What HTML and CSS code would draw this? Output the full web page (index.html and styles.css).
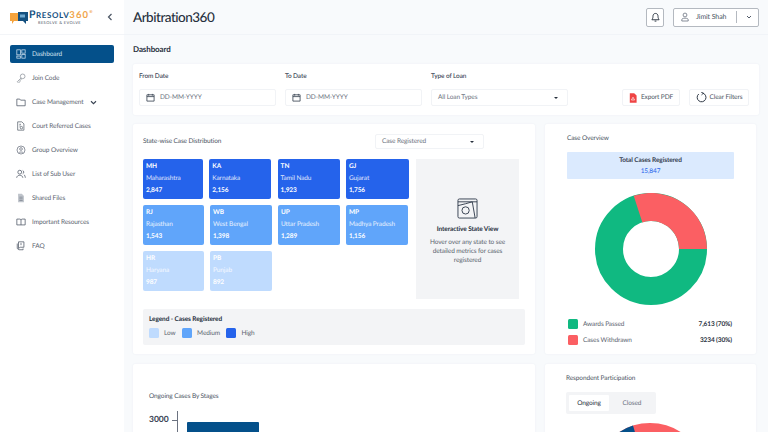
FILE: index.html
```html
<!DOCTYPE html>
<html lang="en">
<head>
<meta charset="utf-8">
<title>Arbitration360</title>
<link rel="stylesheet" href="styles.css">
</head>
<body>
<div class="app">
  <aside class="sidebar">
    <div class="brand">
      <svg class="brand-icon" viewBox="0 0 18 14" width="18" height="14">
        <path d="M0 2h9v8H4l-2 3v-3H0z" fill="#f5a33d"/>
        <path d="M8 1h10v9h-2v3l-3-3H8z" fill="#14507f"/>
        <rect x="10" y="3.500" width="5" height="3" fill="#6fa8cf"/>
      </svg>
      <div class="brand-text">
        <div class="brand-name"><span class="brand-p">P</span><span class="brand-navy">RESOLV</span><span class="brand-num">360</span><sup class="brand-reg">®</sup></div>
        <div class="brand-tag">RESOLVE &amp; EVOLVE</div>
      </div>
      <svg class="collapse" viewBox="0 0 6 8" width="6" height="8"><path d="M4.500 1 1.500 4l3 3" fill="none" stroke="#4b5563" stroke-width="1.200"/></svg>
    </div>
    <nav class="nav">
      <a class="nav-item active">
        <svg viewBox="0 0 12 12" class="ni"><g fill="none" stroke="#cfe0ee" stroke-width=".9"><rect x="1" y="1" width="4.500" height="6"/><rect x="7" y="1" width="4" height="4"/><rect x="1" y="8.500" width="4.500" height="2.500"/><rect x="7" y="6.500" width="4" height="4.500"/></g></svg>
        <span>Dashboard</span>
      </a>
      <a class="nav-item">
        <svg viewBox="0 0 12 12" class="ni"><g fill="none" stroke="#8b929b" stroke-width=".9"><circle cx="8" cy="4" r="2.800"/><path d="M6 6 1.500 10.500l1 1 1-1 .6.500 1-1-.6-.8L7 7"/></g></svg>
        <span>Join Code</span>
      </a>
      <a class="nav-item">
        <svg viewBox="0 0 12 12" class="ni"><path d="M1 2.500h3.500l1 1.300H11V10.500H1z" fill="none" stroke="#4b5563" stroke-width=".9"/></svg>
        <span class="nav-grow">Case Management</span>
        <svg class="nav-chev" viewBox="0 0 8 6" width="7" height="5"><path d="M1 1.500 4 4.500l3-3" fill="none" stroke="#374151" stroke-width="1.300"/></svg>
      </a>
      <a class="nav-item">
        <svg viewBox="0 0 12 12" class="ni"><g fill="none" stroke="#5b6470" stroke-width=".9"><path d="M2 1h5l2.500 2.500V11H2z"/><circle cx="6.500" cy="8" r="1.500"/><path d="M4 4h2M4 6h1.500"/></g></svg>
        <span>Court Referred Cases</span>
      </a>
      <a class="nav-item">
        <svg viewBox="0 0 12 12" class="ni"><g fill="none" stroke="#6b7280" stroke-width=".9"><circle cx="6" cy="6" r="4.800"/><circle cx="6" cy="4.800" r="1.600"/><path d="M3.300 9.500c.5-1.500 4.900-1.500 5.400 0"/></g></svg>
        <span>Group Overview</span>
      </a>
      <a class="nav-item">
        <svg viewBox="0 0 12 12" class="ni"><g fill="none" stroke="#4b5563" stroke-width=".9"><circle cx="4.500" cy="3.800" r="2.300"/><path d="M.8 10.500c.4-4 7-4 7.400 0"/><path d="M8 1.800a2.200 2.200 0 0 1 0 4M9.500 6.800c1 .6 1.500 2 1.700 3.700"/></g></svg>
        <span>List of Sub User</span>
      </a>
      <a class="nav-item">
        <svg viewBox="0 0 12 12" class="ni"><path d="M2.500 1H7l2.500 2.500V11h-7z" fill="#bfc4cb"/><path d="M4 5h4M4 7h4M4 9h4" stroke="#6b7280" stroke-width=".7"/></svg>
        <span>Shared Files</span>
      </a>
      <a class="nav-item">
        <svg viewBox="0 0 12 12" class="ni"><g fill="none" stroke="#4b5563" stroke-width=".9"><path d="M1 2.500h3.500c.8 0 1.500.5 1.500 1.300 0-.8.700-1.300 1.500-1.300H11v7H1z"/><path d="M6 3.800v5.700"/></g></svg>
        <span>Important Resources</span>
      </a>
      <a class="nav-item">
        <svg viewBox="0 0 12 12" class="ni"><g fill="none" stroke="#4b5563" stroke-width=".9"><path d="M3 1h6.500v6.500H5L3 9z"/><path d="M1.500 3v6l2 1.500h5V9"/><path d="M6 2.500v2.500"/></g></svg>
        <span>FAQ</span>
      </a>
    </nav>
  </aside>

  <div class="main">
    <header class="topbar">
      <h1 class="app-title">Arbitration360</h1>
      <div class="top-actions">
        <button class="bell">
          <svg viewBox="0 0 10 12" width="9" height="11"><path d="M5 1.500c-2 0-2.800 1.500-2.800 3.300 0 2-.8 3-1.200 3.700h8c-.4-.7-1.200-1.700-1.200-3.700C7.800 3 7 1.500 5 1.500zM4 10h2" fill="none" stroke="#1f2937" stroke-width="1"/></svg>
        </button>
        <div class="user">
          <svg viewBox="0 0 10 12" width="8" height="10"><g fill="none" stroke="#6b7280" stroke-width="1"><circle cx="5" cy="3.500" r="2.400"/><path d="M1 11V9.500C1 8 2.500 7.500 5 7.500s4 .5 4 2V11z"/></g></svg>
          <span class="user-name">Jimit Shah</span>
          <span class="user-div"></span>
          <svg class="user-chev" viewBox="0 0 8 6" width="6" height="4"><path d="M1 1.500 4 4.500l3-3" fill="none" stroke="#374151" stroke-width="1.300"/></svg>
        </div>
      </div>
    </header>

    <section class="content">
      <h2 class="page-title">Dashboard</h2>

      <div class="card filters">
        <div class="field">
          <label class="lbl">From Date</label>
          <div class="input"><svg class="cal" viewBox="0 0 10 10"><path d="M1 2h8v7H1zM1 4h8M3 1v2M7 1v2" fill="none" stroke="#374151" stroke-width=".9"/></svg><span>DD-MM-YYYY</span></div>
        </div>
        <div class="field">
          <label class="lbl">To Date</label>
          <div class="input"><svg class="cal" viewBox="0 0 10 10"><path d="M1 2h8v7H1zM1 4h8M3 1v2M7 1v2" fill="none" stroke="#374151" stroke-width=".9"/></svg><span>DD-MM-YYYY</span></div>
        </div>
        <div class="field">
          <label class="lbl">Type of Loan</label>
          <div class="input select-in"><span>All Loan Types</span><i class="caret"></i></div>
        </div>
        <div class="filter-btns">
          <button class="btn btn-pdf"><svg viewBox="0 0 10 12" width="8" height="10"><path d="M1 0h5.500L9.500 3v9H1z" fill="#ef4444"/><path d="M3 8.500 5 5l2 3.500z" fill="none" stroke="#fff" stroke-width=".8"/></svg><span>Export PDF</span></button>
          <button class="btn btn-clear"><svg viewBox="0 0 12 12" width="11" height="11"><path d="M7.500 1.300A4.800 4.800 0 1 1 3 2.200" fill="none" stroke="#1f2937" stroke-width="1"/><path d="M5.500 0 8 1.300 6 3.200" fill="none" stroke="#1f2937" stroke-width=".9"/></svg><span>Clear Filters</span></button>
        </div>
      </div>

      <div class="grid">
        <div class="card state-card">
          <div class="state-head">
            <div class="card-title">State-wise Case Distribution</div>
            <div class="input state-select"><span>Case Registered</span><i class="caret"></i></div>
          </div>
          <div class="state-body">
            <div class="tiles">
              <div class="tile-row row-a">
                <div class="tile high"><b>MH</b><span>Maharashtra</span><b>2,847</b></div>
                <div class="tile high"><b>KA</b><span>Karnataka</span><b>2,156</b></div>
                <div class="tile high"><b>TN</b><span>Tamil Nadu</span><b>1,923</b></div>
                <div class="tile high"><b>GJ</b><span>Gujarat</span><b>1,756</b></div>
              </div>
              <div class="tile-row row-b">
                <div class="tile med"><b>RJ</b><span>Rajasthan</span><b>1,543</b></div>
                <div class="tile med"><b>WB</b><span>West Bengal</span><b>1,398</b></div>
                <div class="tile med"><b>UP</b><span>Uttar Pradesh</span><b>1,289</b></div>
                <div class="tile med"><b>MP</b><span>Madhya Pradesh</span><b>1,156</b></div>
              </div>
              <div class="tile-row row-b">
                <div class="tile low"><b>HR</b><span>Haryana</span><b>987</b></div>
                <div class="tile low"><b>PB</b><span>Punjab</span><b>892</b></div>
              </div>
            </div>
            <div class="state-view">
              <svg viewBox="0 0 22 22" width="21" height="21"><g fill="none" stroke="#374151" stroke-width="1"><rect x="1" y="1" width="20" height="20" rx="1.500"/><path d="M1 4h20M16 4l3 17"/><circle cx="9" cy="13" r="3.800"/><path d="M1 8l8-2 7-2"/></g></svg>
              <strong>Interactive State View</strong>
              <p>Hover over any state to see detailed metrics for cases registered</p>
            </div>
          </div>
          <div class="legend">
            <div class="legend-title">Legend - Cases Registered</div>
            <div class="legend-items">
              <i class="sw sw-low"></i><span>Low</span>
              <i class="sw sw-med"></i><span>Medium</span>
              <i class="sw sw-high"></i><span>High</span>
            </div>
          </div>
        </div>

        <div class="card overview">
          <div class="card-title">Case Overview</div>
          <div class="total">
            <strong>Total Cases Registered</strong>
            <span>15,847</span>
          </div>
          <svg class="donut" viewBox="0 0 112 112" width="112" height="112">
            <circle cx="56" cy="56" r="42" fill="none" stroke="#10b981" stroke-width="28"/>
            <path d="M38.700 2.700A56 56 0 0 1 112 56H84A28 28 0 0 0 47.350 29.400z" fill="#fb5f63"/>
          </svg>
          <div class="ov-row"><i class="ov-sw green"></i><span class="ov-name">Awards Passed</span><b>7,613 (70%)</b></div>
          <div class="ov-row"><i class="ov-sw red"></i><span class="ov-name">Cases Withdrawn</span><b>3234 (30%)</b></div>
        </div>

        <div class="card stages">
          <div class="card-title">Ongoing Cases By Stages</div>
          <div class="chart">
            <span class="y-label">3000</span>
            <i class="tick"></i>
            <i class="axis"></i>
            <i class="bar"></i>
          </div>
        </div>

        <div class="card respond">
          <div class="card-title">Respondent Participation</div>
          <div class="tabs"><span class="tab on">Ongoing</span><span class="tab">Closed</span></div>
          <svg class="pie" viewBox="0 0 112 12" width="112" height="12">
            <circle cx="56" cy="56" r="42" fill="none" stroke="#fb5f63" stroke-width="28"/>
            <path d="M14 19A56 56 0 0 1 39 2.600L47 29.400z" fill="#04508a"/>
          </svg>
        </div>
      </div>
    </section>
  </div>
</div>
</body>
</html>
```
FILE: styles.css
```css
* { box-sizing: border-box; }
html, body { margin: 0; height: 432px; overflow: hidden; }
body { font-family: "Lato", "Open Sans", sans-serif; color: #374151; background: #f8fafc; font-size: 6.500px; letter-spacing: -.1px; text-rendering: geometricPrecision; }
.app { display: flex; width: 768px; height: 432px; overflow: hidden; }

.sidebar { width: 124px; flex: none; background: #fff; }
.brand { height: 35px; display: flex; align-items: center; padding: 0 0 0 10px; border-bottom: 1px solid #f3f5f8; }
.brand-icon { flex: none; margin-top: 1px; }
.brand-text { width: 66px; margin-left: 1px; }
.brand-name { font-size: 9px; line-height: 10px; letter-spacing: .6px; white-space: nowrap; font-weight: 700; }
.brand-p { color: #14507f; font-size: 10.500px; }
.brand-navy { color: #14507f; font-size: 8px; }
.brand-num { color: #f0a64c; font-size: 9.500px; letter-spacing: 1.100px; }
.brand-reg { color: #f0a64c; font-size: 4px; line-height: 0; vertical-align: 5px; }
.brand-tag { font-size: 4px; line-height: 4px; color: #4b5563; text-align: center; letter-spacing: .4px; margin-left: 9px; width: 43px; white-space: nowrap; }
.collapse { margin-left: 12px; }

.nav { padding: 10px 10px 0; display: flex; flex-direction: column; gap: 6px; }
.nav-item { height: 18px; display: flex; align-items: center; padding-left: 6px; border-radius: 2px; color: #5b6470; white-space: nowrap; }
.nav-item.active { background: #04508a; color: #cfe0ee; }
.ni { width: 10px; height: 10px; flex: none; margin-right: 6px; }
.nav-grow { width: 58px; }

.main { flex: 1; min-width: 0; display: flex; flex-direction: column; }
.topbar { height: 35px; flex: none; display: flex; align-items: center; justify-content: space-between; padding: 0 9px; border-bottom: 1px solid #f1f4f8; }
.app-title { margin: 0; font-size: 13.500px; letter-spacing: -.5px; font-weight: 500; color: #27303d; }
.top-actions { display: flex; align-items: center; gap: 9px; }
.bell { width: 18px; height: 19px; padding: 0; display: flex; align-items: center; justify-content: center; background: #fff; border: 1px solid #b4b9c0; border-radius: 2px; }
.user { width: 86px; height: 19px; display: flex; align-items: center; background: #fff; border: 1px solid #b4b9c0; border-radius: 2px; padding-left: 7px; }
.user-name { margin-left: 7px; width: 33px; font-size: 7px; color: #4b5563; white-space: nowrap; }
.user-div { width: 1px; height: 12px; flex: none; background: #b4b9c0; margin-left: 7px; }
.user-chev { margin-left: 9px; }

.content { padding: 0 0 0 9px; width: 635px; }
.page-title { margin: 0; height: 29px; font-size: 8px; line-height: 29px; font-weight: 700; color: #27303d; }
.card { background: #fff; border-radius: 2px; box-shadow: 0 0 2px rgba(226, 232, 240, .6); }

.filters { display: flex; width: 626px; height: 51px; padding: 8px 6px 0; margin-bottom: 9px; }
.field { width: 137px; margin-right: 9px; }
.lbl { display: block; line-height: 10px; color: #374151; font-weight: 500; margin-bottom: 7px; }
.input { height: 17px; display: flex; align-items: center; background: #fff; border: 1px solid #f1f3f6; border-radius: 2px; padding-left: 6px; color: #6b7280; white-space: nowrap; }
.cal { width: 9px; height: 9px; flex: none; margin-right: 5px; }
.select-in { justify-content: space-between; padding-right: 9px; }
.caret { width: 0; height: 0; border: 2px solid transparent; border-top: 2.500px solid #27303d; border-bottom: 0; }
.filter-btns { display: flex; gap: 9px; margin-left: 45px; padding-top: 17px; }
.btn { height: 17px; display: flex; align-items: center; justify-content: center; gap: 4px; padding: 0; background: #fff; border: 1px solid #f1f3f6; border-radius: 2px; font-family: inherit; font-size: 6.500px; letter-spacing: -.1px; color: #4b5563; white-space: nowrap; text-rendering: geometricPrecision; }
.btn-pdf { width: 58px; }
.btn-clear { width: 60px; gap: 3px; }

.grid { display: grid; grid-template-columns: 402px 211px; grid-template-rows: 230px 80px; gap: 10px; }
.state-card { padding: 10px 10px 0; }
.card-title { color: #4b5563; line-height: 10px; white-space: nowrap; }
.state-head { display: flex; align-items: center; justify-content: space-between; height: 15px; padding-right: 41px; }
.state-select { width: 109px; height: 15px; justify-content: space-between; padding-right: 9px; }
.state-body { display: flex; margin-top: 10px; }
.tiles { width: 273px; display: flex; flex-direction: column; gap: 6.500px; }
.tile-row { display: grid; column-gap: 6px; }
.row-a { grid-template-columns: 60px 62px 62px 63.500px; column-gap: 6.300px; }
.row-b { grid-template-columns: 61px 62px 62px 62px; }
.tile { height: 39.500px; border-radius: 2px; color: #fff; padding: 2.500px 3px; display: flex; flex-direction: column; justify-content: space-between; line-height: 10px; white-space: nowrap; }
.tile b { font-weight: 700; }
.tile span { font-weight: 400; opacity: .85; }
.high { background: #2563eb; }
.med { background: #60a5fa; }
.low { background: #bfdbfe; }
.state-view { width: 103px; height: 140px; background: #f3f4f6; display: flex; flex-direction: column; align-items: center; padding-top: 39px; text-align: center; }
.state-view strong { line-height: 10px; margin-top: 6px; color: #27303d; white-space: nowrap; }
.state-view p { margin: 3px 0 0; line-height: 9px; color: #5b6470; padding: 0 12px; }
.legend { width: 382px; height: 36px; margin-top: 10px; background: #f3f4f6; border-radius: 2px; padding: 6px 6px 0; }
.legend-title { line-height: 10px; font-weight: 700; color: #27303d; }
.legend-items { display: flex; align-items: center; margin-top: 3px; color: #5b6470; }
.sw { width: 10px; height: 10px; border-radius: 1.500px; margin-right: 5px; }
.legend-items span { margin-right: 6.500px; }
.sw-low { background: #bfdbfe; }
.sw-med { background: #60a5fa; }
.sw-high { background: #2563eb; }

.overview { padding: 10px 22px 0; }
.total { height: 27px; margin-top: 8px; background: #dbeafe; border-radius: 1px; display: flex; flex-direction: column; align-items: center; padding-top: 3px; line-height: 11px; }
.total strong { color: #374151; }
.total span { color: #2563eb; }
.donut { display: block; margin: 14px 0 0 28px; }
.ov-row { display: flex; align-items: center; height: 10px; margin-bottom: 6px; padding: 0 2px 0 1px; }
.donut + .ov-row { margin-top: 14px; }
.ov-sw { width: 10px; height: 10px; border-radius: 1.500px; margin-right: 5px; }
.green { background: #10b981; }
.red { background: #fb5f63; }
.ov-name { flex: 1; color: #5b6470; }
.ov-row b { font-weight: 700; color: #27303d; }

.stages { padding: 28px 16px 0; }
.chart { position: relative; height: 40px; }
.y-label { position: absolute; left: 0; top: 11px; font-size: 8.500px; letter-spacing: 0; line-height: 12px; font-weight: 700; color: #374151; }
.axis { position: absolute; left: 28px; top: 9px; width: 1px; height: 40px; background: #6b7280; }
.tick { position: absolute; left: 23px; top: 18px; width: 5px; height: 1px; background: #6b7280; }
.bar { position: absolute; left: 38px; top: 19.500px; width: 72px; height: 30px; background: #04508a; border-radius: 1px 1px 0 0; }

.respond { padding: 10px 21px 0; }
.tabs { display: flex; width: 90px; height: 22px; margin-top: 8px; padding: 3px; background: #f3f4f6; border-radius: 2px; }
.tab { width: 40px; display: flex; align-items: center; justify-content: center; color: #6b7280; }
.tab + .tab { margin-left: 3px; }
.tab.on { background: #fff; color: #27303d; border-radius: 1px; }
.pie { display: block; margin: 9px 0 0 28px; }
```
